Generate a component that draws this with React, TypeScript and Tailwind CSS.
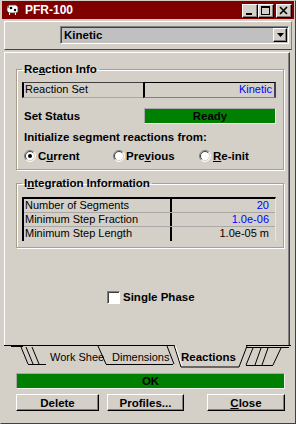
import React from "react";

const raised =
  "border border-t-white border-l-white border-r-black border-b-black shadow-[inset_-1px_-1px_0_#808080]";

const Radio = ({ checked }: { checked?: boolean }) => (
  <svg width="12" height="12" viewBox="0 0 12 12" className="shrink-0">
    <circle cx="6" cy="6" r="5" fill="#fff" />
    <path d="M2.1 9.9 A5.5 5.5 0 0 1 9.9 2.1" fill="none" stroke="#808080" />
    <path d="M9.9 2.1 A5.5 5.5 0 0 1 2.1 9.9" fill="none" stroke="#fff" />
    <path d="M2.8 9.2 A4.5 4.5 0 0 1 9.2 2.8" fill="none" stroke="#404040" />
    <path d="M9.2 2.8 A4.5 4.5 0 0 1 2.8 9.2" fill="none" stroke="#d4d0c8" />
    {checked && <circle cx="6" cy="6" r="2" fill="#000" />}
  </svg>
);

const TitleButton = ({ kind }: { kind: "min" | "max" | "close" }) => (
  <div className={`w-[16px] h-[14px] bg-[#d4d0c8] ${raised} flex items-center justify-center`}>
    <svg width="14" height="12" viewBox="0 0 14 12">
      {kind === "min" && <rect x="3" y="8" width="6" height="2" fill="#000" />}
      {kind === "max" && (
        <>
          <rect x="2.5" y="1.5" width="8" height="8" fill="none" stroke="#000" />
          <rect x="2" y="1" width="9" height="2" fill="#000" />
        </>
      )}
      {kind === "close" && (
        <path d="M3 2 L10 9 M10 2 L3 9" stroke="#000" strokeWidth="1.6" />
      )}
    </svg>
  </div>
);

const AppIcon = () => (
  <svg width="13" height="11" viewBox="0 0 13 11">
    <path d="M1 3 L3 1 L10 1 L12 3 L12 8 L10 9 L3 9 L1 7 Z" fill="#fff" stroke="#404040" strokeWidth="0.8" />
    <circle cx="5" cy="4" r="1.3" fill="#000" />
    <circle cx="9" cy="6" r="1.2" fill="#000" />
    <rect x="3" y="9" width="1" height="2" fill="#fff" />
    <rect x="9" y="9" width="1" height="2" fill="#fff" />
    <rect x="1" y="2" width="2" height="2" fill="#808080" />
  </svg>
);

const GroupBox = ({ title, children, className }: { title: React.ReactNode; children: React.ReactNode; className?: string }) => (
  <fieldset
    className={`border border-[#a89f8c] shadow-[inset_1px_1px_0_#fff,1px_1px_0_#fff] pl-[5px] pr-[7px] pb-[6px] ${className ?? ""}`}
  >
    <legend className="px-[2px] text-[11.5px] font-bold leading-[14px]">{title}</legend>
    {children}
  </fieldset>
);

const integrationRows = [
  { label: "Number of Segments", value: "20", blue: true },
  { label: "Minimum Step Fraction", value: "1.0e-06", blue: true },
  { label: "Minimum Step Length", value: "1.0e-05 m", blue: false },
];

export default function App() {
  return (
    <div className="w-[296px] h-[424px] bg-[#d4d0c8] text-black font-['Liberation_Sans',sans-serif] overflow-hidden border border-t-[#d4d0c8] border-l-[#d4d0c8] border-r-[#404040] border-b-[#404040]">
      {/* Title bar */}
      <div className="mx-[1px] h-[18px] bg-[#800000] flex items-start pt-[3px] pl-[4px] pr-[2px]">
        <AppIcon />
        <span className="ml-[6px] text-white font-bold text-[12px] leading-[12px]">PFR-100</span>
        <div className="ml-auto flex">
          <TitleButton kind="min" />
          <TitleButton kind="max" />
          <div className="w-[2px]" />
          <TitleButton kind="close" />
        </div>
      </div>

      {/* Reaction package selector */}
      <div className="mt-[2px] mx-[3px] h-[29px] border-t border-l border-white border-b border-r border-b-[#404040] border-r-[#808080] pt-[4px] pl-[55px]">
        <div className="w-[229px] h-[18px] bg-[#c0c0c0] border border-t-[#808080] border-l-[#808080] border-r-white border-b-white shadow-[inset_1px_1px_0_#404040] flex items-center">
          <span className="pl-[3px] font-bold text-[11.5px] leading-[14px]">Kinetic</span>
          <div className={`ml-auto mr-[1px] w-[14px] h-[14px] bg-[#d4d0c8] ${raised} flex items-center justify-center`}>
            <svg width="7" height="4" viewBox="0 0 7 4">
              <path d="M0 0 H7 L3.5 4 Z" fill="#000" />
            </svg>
          </div>
        </div>
      </div>

      {/* Tab page */}
      <div className="mt-[2px] ml-[3px] w-[286px] h-[293px] border-t border-l border-white border-r border-r-[#404040] shadow-[inset_-1px_0_0_#808080] pt-[9px] pl-[11px] pr-[5px]">
        <GroupBox title={<>Re<span className="underline">a</span>ction Info</>}>
          <div className="mt-[6px] h-[16px] flex text-[11px] leading-[13px]">
            <div className="w-[121px] border-l-2 border-l-black border-t border-t-[#404040] border-b border-b-[#a8a8a8] pl-[1px]">
              Reaction Set
            </div>
            <div className="flex-1 border-l-2 border-l-black border-t border-t-black border-r-2 border-r-[#404060] border-b border-b-[#808080] text-right pr-[2px] text-[#0000ff]">
              Kinetic
            </div>
          </div>
          <div className="mt-[10px] h-[16px] flex items-center">
            <div className="w-[122px] pl-[2px] font-bold text-[11.5px] leading-[14px]">Set Status</div>
            <div className="flex-1 h-[16px] bg-[#008000] border border-t-[#a8a8a8] border-l-[#a8a8a8] border-r-[#f0f0f0] border-b-[#f0f0f0] text-center font-bold text-[11.5px] leading-[14px]">
              Ready
            </div>
          </div>
          <div className="mt-[6px] pl-[2px] font-bold text-[11.5px] leading-[14px]">
            Initialize segment reactions from:
          </div>
          <div className="mt-[5px] h-[14px] flex items-center pl-[2px] font-bold text-[11.5px] leading-[14px]">
            <div className="w-[89px] flex items-center gap-[2px]">
              <Radio checked />
              <span>C<span className="underline">u</span>rrent</span>
            </div>
            <div className="w-[86px] flex items-center gap-[1px]">
              <Radio />
              <span>Pre<span className="underline">v</span>ious</span>
            </div>
            <div className="flex items-center gap-[2px]">
              <Radio />
              <span><span className="underline">R</span>e-init</span>
            </div>
          </div>
        </GroupBox>

        <GroupBox className="mt-[6px]" title={<>I<span className="underline">n</span>tegration Information</>}>
          <div className="mt-[7px] border-t-2 border-l-2 border-black border-r border-r-[#e8e6e0] text-[11px] leading-[13px]">
            {integrationRows.map((row, i) => (
              <div
                key={row.label}
                className={`h-[14px] flex ${i < integrationRows.length - 1 ? "border-b border-[#a8a8a8]" : ""}`}
              >
                <div className="w-[146px] pl-[1px]">{row.label}</div>
                <div className={`flex-1 border-l-2 border-black text-right pr-[6px] ${row.blue ? "text-[#0000ff]" : ""}`}>
                  {row.value}
                </div>
              </div>
            ))}
          </div>
        </GroupBox>

        <div className="mt-[42px] flex items-center ml-[91px]">
          <div className="w-[13px] h-[13px] bg-white border border-t-[#808080] border-l-[#808080] border-r-white border-b-white shadow-[inset_1px_1px_0_#404040]" />
          <span className="ml-[3px] font-bold text-[11.5px] leading-[14px]">Single Phase</span>
        </div>
      </div>

      {/* Tab strip */}
      <div className="relative h-[24px] text-[11px] leading-[14px]">
        <svg className="absolute inset-0" width="296" height="24" viewBox="0 0 296 24">
          <g stroke="#000" strokeWidth="1" fill="none">
            <path d="M3 0.5 H173" />
            <path d="M245 0.5 H290" />
            <path d="M10 1.5 H22" />
            <path d="M20 2 L27 19 M25 2 L32 19 M31 2 L38 19" />
            <path d="M27 19.5 H45" />
            <path d="M97 1 L105 19" />
            <path d="M105 19.5 H172" />
            <path d="M166 1 L173 19" />
            <path d="M173 0 L180 22 H238 L246 1" />
            <path d="M246 2.5 H288" />
            <path d="M252 3 L245 20 M260 3 L254 20 M267 3 L261 20 M280 3 L272 20" />
            <path d="M245 20.5 H272" />
          </g>
          <path d="M174.5 1 L181 21" stroke="#fff" strokeWidth="1" fill="none" />
        </svg>
        <div className="relative flex pt-[5px]">
          <span className="ml-[49px]">Work Shee</span>
          <span className="absolute left-[111px] top-[5px]">Dimensions</span>
          <span className="absolute left-[180px] top-[5px] font-bold text-[11.5px]">Reactions</span>
        </div>
      </div>

      {/* Status bar */}
      <div className="mt-[4px] ml-[15px] w-[269px] h-[16px] bg-[#008000] border border-t-[#a8a8a8] border-l-[#a8a8a8] border-r-[#f0f0f0] border-b-[#f0f0f0] text-center font-bold text-[11.5px] leading-[14px]">
        OK
      </div>

      {/* Buttons */}
      <div className="mt-[5px] flex font-bold text-[11.5px] leading-[14px]">
        <button className={`ml-[15px] w-[83px] h-[17px] bg-[#d4d0c8] ${raised}`}>Delete</button>
        <button className={`ml-[8px] w-[77px] h-[17px] bg-[#d4d0c8] ${raised}`}>Profiles...</button>
        <button className={`ml-[23px] w-[78px] h-[17px] bg-[#d4d0c8] ${raised}`}>
          <span className="underline">C</span>lose
        </button>
      </div>
    </div>
  );
}
